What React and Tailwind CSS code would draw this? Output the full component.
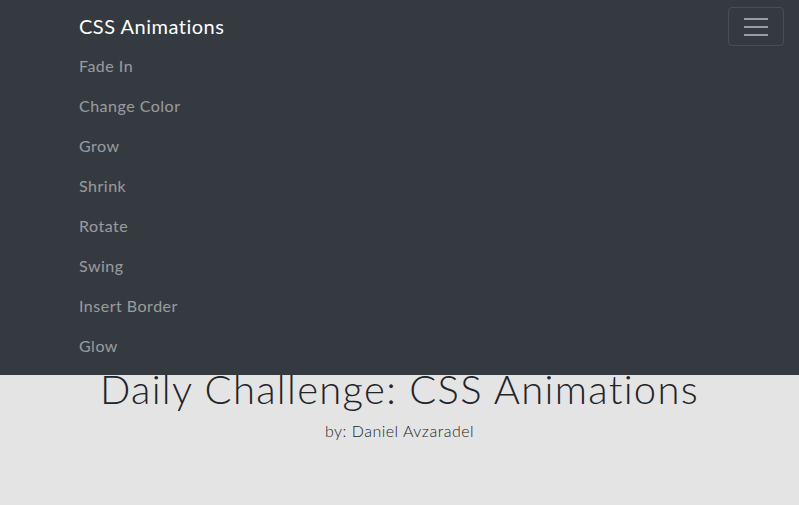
export default function App() {
  const links = ["Fade In", "Change Color", "Grow", "Shrink", "Rotate", "Swing", "Insert Border", "Glow"];
  return (
    <div className="relative min-h-[505px] w-full bg-[#e4e4e4] font-['Lato','Open_Sans',sans-serif]">
      <nav className="absolute left-0 right-0 top-0 z-10 bg-[#343a40] pb-[9px] pt-[6px]">
        <div className="flex items-center pl-[79px] pr-[15px]">
          <a className="py-[5px] text-[20px] leading-[30px] tracking-[0.5px] text-white">CSS Animations</a>
          <button className="ml-auto mt-[1px] flex h-[39px] w-[56px] flex-col items-center justify-center gap-[6px] rounded-[4px] border border-white/10">
            <span className="h-[2px] w-[24px] bg-white/50" />
            <span className="h-[2px] w-[24px] bg-white/50" />
            <span className="h-[2px] w-[24px] bg-white/50" />
          </button>
        </div>
        <ul className="flex flex-col pl-[79px]">
          {links.map((l) => (
            <li key={l} className="py-[8px] text-[16px] leading-[24px] tracking-[0.5px] text-white/50">
              {l}
            </li>
          ))}
        </ul>
      </nav>
      <div className="flex flex-col items-center pt-[365px] text-[#212529]">
        <h1 className="text-[40px] font-light leading-[48px] tracking-[1.3px]">Daily Challenge: CSS Animations</h1>
        <p className="mt-[6px] text-[16px] font-light leading-[24px] tracking-[0.5px]">by: Daniel Avzaradel</p>
      </div>
    </div>
  );
}
